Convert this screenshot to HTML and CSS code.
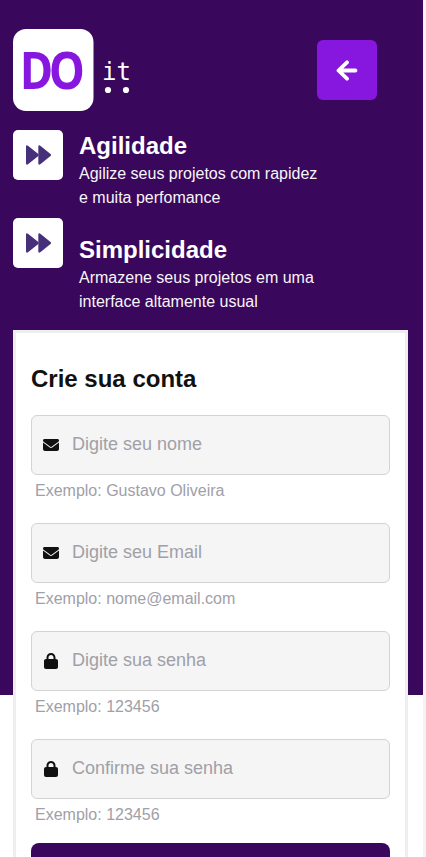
FILE: index.html
```html
<!DOCTYPE html>
<html lang="pt-BR">
<head>
<meta charset="utf-8">
<meta name="viewport" content="width=device-width, initial-scale=1">
<title>DO it</title>
<link rel="stylesheet" href="styles.css">
</head>
<body>
<svg class="symbols" aria-hidden="true">
  <symbol id="mail" viewBox="0 0 512 512"><path d="M48 64C21.500 64 0 85.500 0 112c0 15.100 7.100 29.300 19.200 38.400L236.800 313.600c11.400 8.500 27 8.500 38.400 0L492.800 150.400c12.100-9.100 19.200-23.300 19.200-38.400c0-26.500-21.500-48-48-48H48zM0 176V384c0 35.300 28.700 64 64 64H448c35.300 0 64-28.700 64-64V176L294.400 339.200c-22.800 17.100-54 17.100-76.800 0L0 176z"/></symbol>
  <symbol id="lock" viewBox="0 0 448 512"><path d="M144 144v48H304V144c0-44.200-35.800-80-80-80s-80 35.800-80 80zM80 192V144C80 64.500 144.500 0 224 0s144 64.500 144 144v48h16c35.300 0 64 28.700 64 64V448c0 35.300-28.700 64-64 64H64c-35.300 0-64-28.700-64-64V256c0-35.300 28.700-64 64-64H80z"/></symbol>
  <symbol id="forward" viewBox="0 0 26 20"><path d="M0 1.700Q0-.5 2 .7L12.300 8.900V1.700Q12.300-.5 14.300.7L24.500 9Q25.700 10 24.500 11L14.300 19.300Q12.300 20.500 12.300 18.300V11.100L2 19.300Q0 20.500 0 18.300Z"/><path class="seam" d="M12.500 1V19"/></symbol>
</svg>
<main class="page">
  <header class="header">
    <svg class="logo" viewBox="0 0 120 82" role="img" aria-label="DO it">
      <rect width="80.500" height="82" rx="13" fill="#fff"/>
      <text class="logo-do" transform="translate(7 60.300) scale(.87 1)">DO</text>
      <text class="logo-it" x="89" y="51">it</text>
      <circle cx="95" cy="61" r="3.100" fill="#fff"/><circle cx="113" cy="61" r="3.100" fill="#fff"/>
    </svg>
    <button class="back" aria-label="Voltar">
      <svg width="22" height="21" viewBox="0 0 22 21"><path d="M11 2.300L2.500 10.500L11 18.700M3 10.500H19.500"/></svg>
    </button>
  </header>
  <section class="features">
    <div class="feature-icons">
      <span class="tile"><svg><use href="#forward"/></svg></span>
      <span class="tile"><svg><use href="#forward"/></svg></span>
    </div>
    <div class="feature-texts">
      <div><h2>Agilidade</h2><p>Agilize seus projetos com rapidez e muita perfomance</p></div>
      <div><h2>Simplicidade</h2><p>Armazene seus projetos em uma interface altamente usual</p></div>
    </div>
  </section>
  <form class="card">
    <h1>Crie sua conta</h1>
    <div class="field"><label class="box"><svg><use href="#mail"/></svg><input type="text" placeholder="Digite seu nome"></label><p>Exemplo: Gustavo Oliveira</p></div>
    <div class="field"><label class="box"><svg><use href="#mail"/></svg><input type="email" placeholder="Digite seu Email"></label><p>Exemplo: nome@email.com</p></div>
    <div class="field"><label class="box"><svg><use href="#lock"/></svg><input type="password" placeholder="Digite sua senha"></label><p>Exemplo: 123456</p></div>
    <div class="field"><label class="box"><svg><use href="#lock"/></svg><input type="password" placeholder="Confirme sua senha"></label><p>Exemplo: 123456</p></div>
    <button class="submit" type="button"></button>
  </form>
</main>
</body>
</html>
```
FILE: styles.css
```css
* { box-sizing: border-box; margin: 0; padding: 0; }
html { background: #f3f3f3; height: 857px; overflow: hidden; }
body { height: 857px; overflow: hidden; font-family: "Liberation Sans", Arial, sans-serif; font-size: 16px; }
.symbols { display: none; }
.page { width: 423px; height: 857px; overflow: hidden; padding: 29px 15px 0 13px; background: linear-gradient(#39075b 695px, #fff 695px); }
.header { display: flex; align-items: center; justify-content: space-between; padding-right: 31px; height: 82px; }
.logo { width: 120px; height: 82px; }
.logo-do { font: 700 52px "Noto Sans", sans-serif; letter-spacing: -4.6px; fill: #8716de; }
.logo-it { font: 24px "DejaVu Sans Mono", monospace; fill: #fff; }
.back { width: 60px; height: 60px; border: 0; border-radius: 6px; background: #8716de; display: grid; place-items: center; }
.back path { fill: none; stroke: #fff; stroke-width: 3.8; stroke-linejoin: round; stroke-linecap: round; }
.features { display: flex; gap: 16px; margin-top: 19px; height: 200px; color: #fff; }
.feature-icons { display: flex; flex-direction: column; gap: 38px; }
.tile { width: 50px; height: 50px; border-radius: 5px; background: #fff; display: grid; place-items: center; padding-left: 2px; }
.tile svg { width: 26px; height: 20px; fill: #46307a; }
.seam { stroke: #8474aa; stroke-width: .5; }
.feature-texts { width: 250px; display: flex; flex-direction: column; gap: 24px; }
.feature-texts h2 { font-size: 24px; line-height: 31px; margin-bottom: 1px; }
.feature-texts p { line-height: 24px; color: #f8f5fa; }
.card { width: 395px; height: 620px; border: 3px solid #eee; background: #fff; padding: 30px 15px; }
.card h1 { font-size: 24px; line-height: 32px; color: #111; margin-bottom: 20px; }
.field { height: 108px; }
.box { display: flex; align-items: center; height: 60px; border: 1px solid #d3d3d3; border-radius: 6px; background: #f5f5f5; padding: 0 11px; gap: 13px; }
.box svg { width: 16px; height: 16px; fill: #111; flex: none; }
.box input { flex: 1; min-width: 0; border: 0; outline: 0; background: transparent; font: 18px "Liberation Sans", Arial, sans-serif; margin-bottom: 2px; }
.box input::placeholder { color: #a0a0a8; opacity: 1; }
.field p { padding-left: 4px; line-height: 24px; margin-top: 4px; color: #a0a0a8; }
.submit { display: block; width: 100%; height: 60px; margin-top: -4px; border: 0; border-radius: 8px; background: #39075b; }
```
